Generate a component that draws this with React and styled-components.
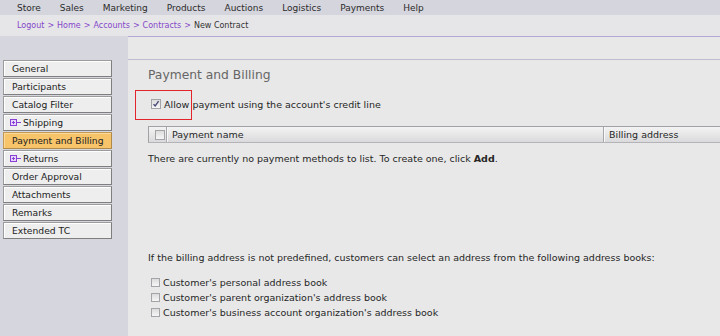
import React from "react";
import styled, { createGlobalStyle } from "styled-components";

const GlobalStyle = createGlobalStyle`
  html, body {
    margin: 0;
    padding: 0;
    background: #e8e8e8;
  }
  body {
    font-family: "DejaVu Sans", Verdana, sans-serif;
    color: #333;
  }
`;

const Page = styled.div`
  width: 720px;
  height: 336px;
  display: flex;
  flex-direction: column;
  overflow: hidden;
`;

const NavBar = styled.nav`
  height: 15px;
  display: flex;
  align-items: center;
  gap: 19px;
  padding-left: 17px;
  background: #d5d5dd;
  font-size: 9px;
  color: #2b2b2b;
`;

const Crumbs = styled.div`
  height: 21px;
  display: flex;
  align-items: center;
  padding-left: 17px;
  background: #e6e6e8;
  font-size: 8px;
  color: #333;
`;

const CrumbLink = styled.a`
  color: #8547c9;
  text-decoration: none;
`;

const Sep = styled.span`
  color: #8547c9;
  margin: 0 3px;
`;

const Body = styled.div`
  flex: 1;
  display: flex;
`;

const Sidebar = styled.aside`
  width: 128px;
  flex-shrink: 0;
  padding: 24px 0 0 3px;
  box-sizing: border-box;
  background: #d6d6de;
  display: flex;
  flex-direction: column;
  gap: 1px;
`;

const SideButton = styled.div`
  width: 109px;
  height: 17px;
  box-sizing: border-box;
  display: flex;
  align-items: center;
  padding-left: ${(p) => (p.$tree ? "6px" : "8px")};
  font-size: 9.2px;
  color: #222;
  border: 1px solid ${(p) => (p.$active ? "#c39a55" : "#9c9c9c")};
  border-right-color: ${(p) => (p.$active ? "#b08a48" : "#7f7f7f")};
  border-bottom-color: ${(p) => (p.$active ? "#b08a48" : "#7f7f7f")};
  background: ${(p) => (p.$active ? "#f7c46a" : "#eeeeee")};
  box-shadow: inset 1px 1px 0 ${(p) => (p.$active ? "#fbd99a" : "#ffffff")};
`;

const TreeIcon = styled.svg`
  width: 11px;
  height: 7px;
  margin-right: 2px;
  flex-shrink: 0;
`;

const Main = styled.main`
  flex: 1;
  display: flex;
  flex-direction: column;
  border-top: 1px solid #b6a6d6;
`;

const Strip = styled.div`
  height: 22px;
  border-bottom: 1px solid #c0bcd0;
  background: #e8e8e8;
`;

const Content = styled.section`
  padding-left: 20px;
  font-size: 9.5px;
  color: #262626;
`;

const Heading = styled.h2`
  margin: 8px 0 0;
  font-size: 12.3px;
  line-height: 15px;
  font-weight: normal;
  color: #666;
`;

const CheckRow = styled.label`
  position: relative;
  display: flex;
  align-items: center;
  height: ${(p) => p.$h || 15}px;
  margin-top: ${(p) => p.$mt || 0}px;
`;

const Box = styled.span`
  width: ${(p) => p.$size || 9}px;
  height: ${(p) => p.$size || 9}px;
  box-sizing: border-box;
  margin: 0 ${(p) => p.$gap || 3}px 0 3px;
  border: 1px solid #a4a4a8;
  background: linear-gradient(#dcdcdc, #f6f6f6);
  display: flex;
  align-items: center;
  justify-content: center;
  flex-shrink: 0;
`;

const Highlight = styled.span`
  position: absolute;
  left: -13px;
  top: -7px;
  width: 57px;
  height: 30px;
  box-sizing: border-box;
  border: 1px solid #e3242b;
  pointer-events: none;
`;

const TableHead = styled.div`
  margin-top: 15px;
  height: 17px;
  box-sizing: border-box;
  display: flex;
  align-items: stretch;
  border: 1px solid #a2a2a6;
  border-right: none;
  border-bottom-color: #b4b4b8;
  background: linear-gradient(#f3f3f3, #dadadc);
`;

const HeadCell = styled.div`
  display: flex;
  align-items: center;
  width: ${(p) => (p.$w ? `${p.$w}px` : "auto")};
  flex: ${(p) => (p.$w ? "none" : 1)};
  padding-left: ${(p) => p.$pl || 0}px;
  box-sizing: border-box;
  border-left: ${(p) => (p.$divide ? "1px solid #a8a8ac" : "none")};
  box-shadow: ${(p) => (p.$divide ? "inset 1px 0 0 #f8f8f8" : "none")};
`;

const Message = styled.p`
  margin: ${(p) => p.$mt}px 0 0;
  line-height: 14px;
`;

const Options = styled.div`
  margin-top: 10px;
  display: flex;
  flex-direction: column;
`;

const navItems = [
  "Store",
  "Sales",
  "Marketing",
  "Products",
  "Auctions",
  "Logistics",
  "Payments",
  "Help",
];

const sections = [
  { label: "General" },
  { label: "Participants" },
  { label: "Catalog Filter" },
  { label: "Shipping", tree: true },
  { label: "Payment and Billing", active: true },
  { label: "Returns", tree: true },
  { label: "Order Approval" },
  { label: "Attachments" },
  { label: "Remarks" },
  { label: "Extended TC" },
];

const addressBooks = [
  "Customer's personal address book",
  "Customer's parent organization's address book",
  "Customer's business account organization's address book",
];

function PlusIcon() {
  return (
    <TreeIcon viewBox="0 0 11 7">
      <rect x="0.5" y="0.5" width="6" height="6" fill="#e6d6fa" stroke="#8a3fd6" />
      <path d="M2 3.5h3M3.5 2v3" stroke="#8a3fd6" strokeWidth="1" />
      <path d="M7 3.5h4" stroke="#8a3fd6" strokeWidth="1" />
    </TreeIcon>
  );
}

function App() {
  return (
    <Page>
      <GlobalStyle />
      <NavBar>
        {navItems.map((item) => (
          <span key={item}>{item}</span>
        ))}
      </NavBar>
      <Crumbs>
        <CrumbLink>Logout</CrumbLink>
        <Sep>&gt;</Sep>
        <CrumbLink>Home</CrumbLink>
        <Sep>&gt;</Sep>
        <CrumbLink>Accounts</CrumbLink>
        <Sep>&gt;</Sep>
        <CrumbLink>Contracts</CrumbLink>
        <Sep>&gt;</Sep>
        <span>New Contract</span>
      </Crumbs>
      <Body>
        <Sidebar>
          {sections.map((s) => (
            <SideButton key={s.label} $active={s.active} $tree={s.tree}>
              {s.tree && <PlusIcon />}
              {s.label}
            </SideButton>
          ))}
        </Sidebar>
        <Main>
          <Strip />
          <Content>
            <Heading>Payment and Billing</Heading>
            <CheckRow $h={14} $mt={14}>
              <Box $size={10}>
                <svg width="8" height="8" viewBox="0 0 8 8">
                  <path d="M1.5 4.2L3.2 6L6.6 1.2" fill="none" stroke="#4b4b7a" strokeWidth="1.4" />
                </svg>
              </Box>
              Allow payment using the account's credit line
              <Highlight />
            </CheckRow>
            <TableHead>
              <HeadCell $w={17} $pl={3}>
                <Box $size={10} $gap={0} />
              </HeadCell>
              <HeadCell $w={437} $pl={5} $divide>
                Payment name
              </HeadCell>
              <HeadCell $pl={5} $divide>
                Billing address
              </HeadCell>
            </TableHead>
            <Message $mt={9}>
              There are currently no payment methods to list. To create one,
              click <b>Add</b>.
            </Message>
            <Message $mt={85}>
              If the billing address is not predefined, customers can select an
              address from the following address books:
            </Message>
            <Options>
              {addressBooks.map((book) => (
                <CheckRow key={book}>
                  <Box />
                  {book}
                </CheckRow>
              ))}
            </Options>
          </Content>
        </Main>
      </Body>
    </Page>
  );
}

export default App;
